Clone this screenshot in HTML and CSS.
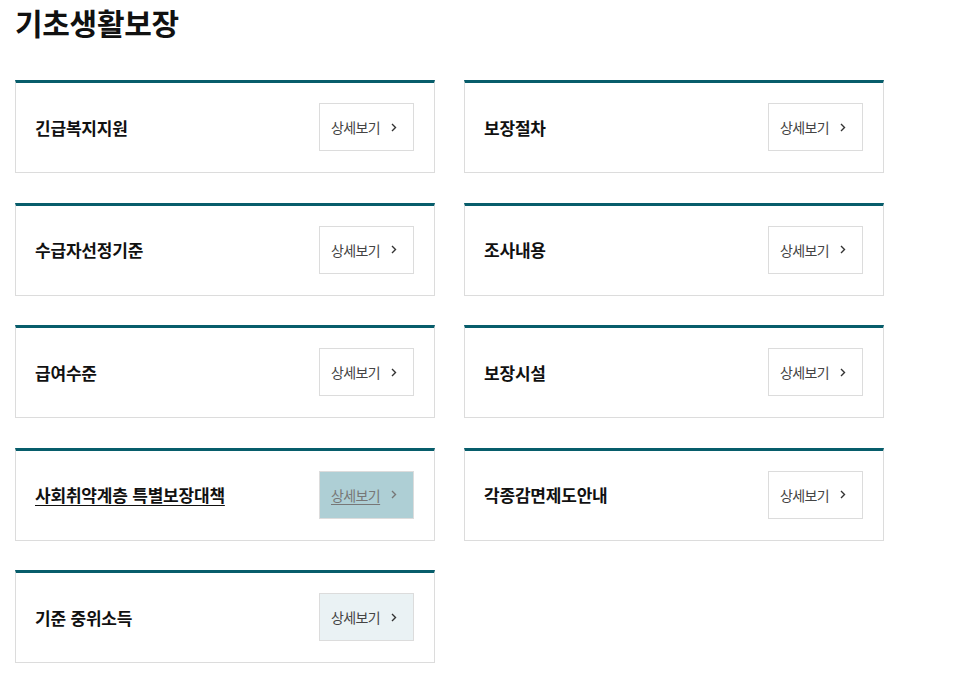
FILE: index.html
```html
<!DOCTYPE html>
<html lang="ko">
<head>
  <meta charset="UTF-8" />
  <meta name="viewport" content="width=device-width, initial-scale=1.0"/>
  <title>기초생활보장</title>
  <link rel="stylesheet" href="styles.css">
</head>
<body>

  <h1 class="page-title">기초생활보장</h1>

  <div class="card-list">
    <div class="card">
      <span class="card-name">긴급복지지원</span>
      <a class="more-btn" href="#">상세보기 <svg width="6" height="9" viewBox="0 0 6 9"><path d="M1 1l3.5 3.5L1 8" /></svg></a>
    </div>
    <div class="card">
      <span class="card-name">보장절차</span>
      <a class="more-btn" href="#">상세보기 <svg width="6" height="9" viewBox="0 0 6 9"><path d="M1 1l3.5 3.5L1 8" /></svg></a>
    </div>
    <div class="card">
      <span class="card-name">수급자선정기준</span>
      <a class="more-btn" href="#">상세보기 <svg width="6" height="9" viewBox="0 0 6 9"><path d="M1 1l3.5 3.5L1 8" /></svg></a>
    </div>
    <div class="card">
      <span class="card-name">조사내용</span>
      <a class="more-btn" href="#">상세보기 <svg width="6" height="9" viewBox="0 0 6 9"><path d="M1 1l3.5 3.5L1 8" /></svg></a>
    </div>
    <div class="card">
      <span class="card-name">급여수준</span>
      <a class="more-btn" href="#">상세보기 <svg width="6" height="9" viewBox="0 0 6 9"><path d="M1 1l3.5 3.5L1 8" /></svg></a>
    </div>
    <div class="card">
      <span class="card-name">보장시설</span>
      <a class="more-btn" href="#">상세보기 <svg width="6" height="9" viewBox="0 0 6 9"><path d="M1 1l3.5 3.5L1 8" /></svg></a>
    </div>
    <div class="card active">
      <span class="card-name">사회취약계층 특별보장대책</span>
      <a class="more-btn" href="#">상세보기 <svg width="6" height="9" viewBox="0 0 6 9"><path d="M1 1l3.5 3.5L1 8" /></svg></a>
    </div>
    <div class="card">
      <span class="card-name">각종감면제도안내</span>
      <a class="more-btn" href="#">상세보기 <svg width="6" height="9" viewBox="0 0 6 9"><path d="M1 1l3.5 3.5L1 8" /></svg></a>
    </div>
    <div class="card visited">
      <span class="card-name">기준 중위소득</span>
      <a class="more-btn" href="#">상세보기 <svg width="6" height="9" viewBox="0 0 6 9"><path d="M1 1l3.5 3.5L1 8" /></svg></a>
    </div>
  </div>

</body>
</html>
```

FILE: styles.css
```css
body {
  font-family: "Noto Sans CJK KR", "Noto Sans", sans-serif;
  background: #fff;
  color: #111;
  margin: 0;
  padding: 0 15px;
}

.page-title {
  font-size: 30px;
  font-weight: 700;
  line-height: 40px;
  margin: 2px 0 38px;
  letter-spacing: -0.3px;
}

.card-list {
  display: grid;
  grid-template-columns: 420px 420px;
  column-gap: 29px;
  row-gap: 29.5px;
}

.card {
  display: flex;
  align-items: center;
  justify-content: space-between;
  border: 1px solid #dcdcdc;
  border-top: 3px solid #075d6b;
  padding: 20px 20px 21px 19px;
}

.card-name {
  font-size: 17px;
  font-weight: 700;
  color: #111;
  letter-spacing: -0.2px;
}

.more-btn {
  display: flex;
  align-items: center;
  gap: 11px;
  box-sizing: border-box;
  width: 95px;
  height: 48px;
  padding-left: 11px;
  border: 1px solid #dcdcdc;
  background: #fff;
  color: #444;
  font-size: 14px;
  text-decoration: none;
  letter-spacing: -0.6px;
}

.more-btn svg {
  fill: none;
  stroke: #333;
  stroke-width: 1.4;
}

.active .card-name {
  text-decoration: underline;
  text-underline-offset: 3px;
}

.active .more-btn {
  background: #aecfd5;
  color: #777;
  text-decoration: underline;
  text-underline-offset: 3px;
}

.active .more-btn svg {
  stroke: #777;
}

.visited .more-btn {
  background: #eaf2f4;
}
```
